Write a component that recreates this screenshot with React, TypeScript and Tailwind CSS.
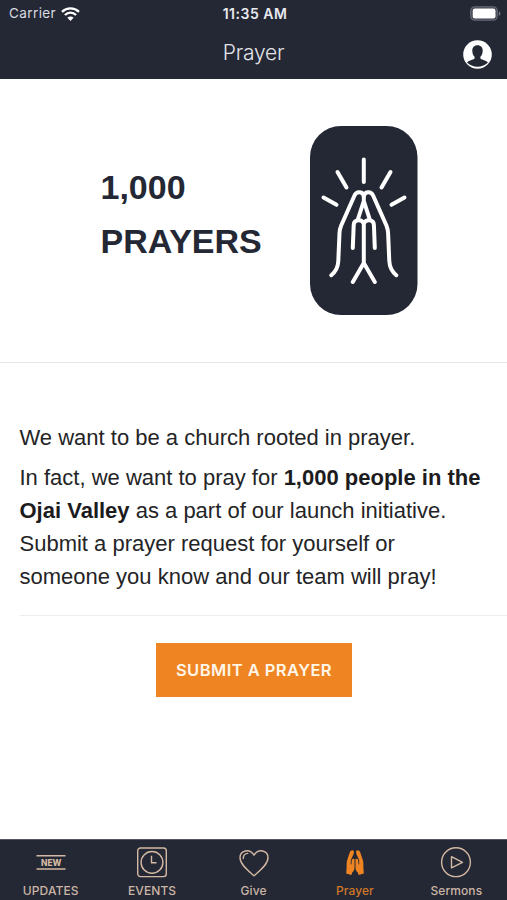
import type { ReactNode } from "react";

const TAN = "#d3b8a3";
const ORANGE = "#ef8522";

function WifiIcon() {
  return (
    <svg width="19" height="14" viewBox="0 0 19 14" fill="none" stroke="#fff" strokeWidth="2.3">
      <path d="M1 4.9C5.9 .3 13.1 .3 18 4.9" />
      <path d="M3.9 8C7.2 5 11.8 5 15.1 8" />
      <path d="M9.5 14 6.4 10.8C8.2 9.1 10.8 9.1 12.6 10.8Z" fill="#fff" stroke="none" />
    </svg>
  );
}

function BatteryIcon() {
  return (
    <svg width="31" height="15" viewBox="0 0 31 15">
      <rect x=".8" y=".8" width="26.4" height="13.4" rx="4" fill="#3d404b" stroke="#666974" strokeWidth="1.3" />
      <rect x="2.7" y="2.6" width="22.8" height="9.8" rx="2.2" fill="#fff" />
      <path d="M28.8 5.2c2.1.8 2.1 3.8 0 4.6Z" fill="#747781" />
    </svg>
  );
}

function ProfileIcon() {
  return (
    <svg width="29" height="29" viewBox="0 0 29 29">
      <circle cx="14.5" cy="14.5" r="14.3" fill="#fff" />
      <path
        d="M14.5 5.2c3.4 0 5.2 2.3 5.2 5.5 0 2.5-.9 4.8-2.3 6.1v1.500c0 1.300 5.800 2 7.600 4.300-2.600 2.700-6.300 4.200-10.500 4.200s-7.900-1.500-10.500-4.200c1.800-2.300 7.600-3 7.600-4.300v-1.500c-1.400-1.300-2.300-3.600-2.300-6.100 0-3.200 1.800-5.500 5.200-5.500Z"
        fill="#242834"
      />
    </svg>
  );
}

function PrayingHands() {
  return (
    <svg
      width="108"
      height="190"
      viewBox="310 126 108 190"
      fill="none"
      stroke="#fff"
      strokeWidth="4"
      strokeLinecap="round"
      strokeLinejoin="round"
    >
      <rect x="310" y="126" width="107.5" height="189" rx="31" fill="#242834" stroke="none" />
      <path d="M363.8 159.5V182M337.5 172l9 15.5M390.5 172l-9 15.5M323.5 197.5l13 7.3M404.5 197.5l-13 7.3" />
      <path d="M331.3 275.2c5-4 6.7-8.500 7-14.200L339.500 233c.1-3 .7-5 1.700-7.500L354.500 195.500c2.200-5 8.700-4 9.300.8.600-4.800 7.100-5.800 9.300-.8l13.300 30c1 2.500 1.600 4.500 1.700 7.500l1.200 28c.3 5.700 2 10.200 7 14.200" />
      <path d="M363.800 196v5l-6 18.500M363.800 201l6 18.500M352.800 248l.9-23c.2-5.500 8-6.500 10.100-1.200 2.100-5.300 9.900-4.300 10.100 1.200l.9 23M363.800 224v39M352.800 282l11-19 11 19" />
    </svg>
  );
}

function NewIcon() {
  return (
    <svg width="32" height="32" viewBox="0 0 32 32">
      <path d="M1.500 8.700h29M1.500 22h29" stroke={TAN} strokeWidth="1.400" />
      <text
        x="6"
        y="18.600"
        textLength="20.500"
        lengthAdjust="spacingAndGlyphs"
        fontSize="8.600"
        fontWeight="800"
        fontFamily="Inter, sans-serif"
        fill={TAN}
      >
        NEW
      </text>
    </svg>
  );
}

function ClockIcon() {
  return (
    <svg width="32" height="32" viewBox="0 0 32 32" fill="none" stroke={TAN} strokeWidth="1.400">
      <rect x="1.700" y="1" width="28.600" height="28.600" rx="2.800" />
      <circle cx="16" cy="15.400" r="10.900" />
      <path d="M15.500 8.700v7h5" />
    </svg>
  );
}

function HeartIcon() {
  return (
    <svg width="32" height="32" viewBox="0 0 32 32" fill="none" stroke={TAN} strokeWidth="1.400" strokeLinecap="round" strokeLinejoin="round">
      <path d="M16 28.800C10.500 24 2 17.500 2 10.800 2 3 11.700 1.200 16 8.200 20.300 1.200 30 3 30 10.800 30 17.500 21.500 24 16 28.800Z" />
      <path d="M5.300 11.500c-.2-3 1.600-5 4.400-5.100" />
    </svg>
  );
}

function HandsIcon() {
  return (
    <svg width="32" height="32" viewBox="0 0 32 32" fill={ORANGE}>
      <path d="M14.900 4c-1.300-1.500-3.500-.6-4.100 1.200L7.900 14c-.6 3.200 0 6.400-.5 9.400l-.2 3.200 5.200 1.300.8-2.500c1.700-1.300 2.300-2.800 2.300-5v-8.300c-1.700-.8-2.700.3-2.800 1.900l-.2 3.500-.8-.2.200-4.300 2.800-6.300Z" />
      <path d="M17.100 4c1.300-1.500 3.500-.6 4.100 1.200l2.900 8.800c.6 3.200 0 6.400.5 9.400l.2 3.200-5.200 1.300-.8-2.500c-1.700-1.300-2.300-2.800-2.300-5v-8.300c1.700-.8 2.700.3 2.800 1.900l.2 3.500.8-.2-.2-4.300-2.800-6.300Z" />
    </svg>
  );
}

function PlayIcon() {
  return (
    <svg width="32" height="32" viewBox="0 0 32 32" fill="none" stroke={TAN} strokeWidth="1.400" strokeLinejoin="round">
      <circle cx="16" cy="15.200" r="14.400" />
      <path d="M11.500 9.700v11.200l11-5.600Z" />
    </svg>
  );
}

function Tab({ icon, label, active = false }: { icon: ReactNode; label: string; active?: boolean }) {
  return (
    <button className="flex flex-1 flex-col items-center pt-[7px]">
      {icon}
      <span
        className={`mt-[4px] text-[12px] leading-[15px] font-medium tracking-[0.1px] ${active ? "text-[#ce7729]" : "text-[#cbb5a6]"}`}
      >
        {label}
      </span>
    </button>
  );
}

export default function App() {
  return (
    <div className="flex h-[900px] w-[507px] flex-col overflow-hidden bg-white font-['Liberation_Sans',Arial,sans-serif] text-[#242426]">
      <header className="h-[79px] shrink-0 bg-[#242834] font-[Inter,sans-serif]">
        <div className="grid h-[27px] grid-cols-3 items-center pr-[6px] pl-[9px]">
          <div className="flex items-center gap-[5px] text-[13.5px] tracking-[0.4px] text-[#d9dae0]">
            Carrier
            <WifiIcon />
          </div>
          <div className="text-center text-[14px] font-semibold tracking-[0.5px] text-[#e9eaf0]">11:35 AM</div>
          <div className="flex justify-end">
            <BatteryIcon />
          </div>
        </div>
        <div className="grid h-[52px] grid-cols-[1fr_auto_1fr] items-center pr-[15px] pl-[15px]">
          <span />
          <h1 className="text-[21px] font-light tracking-[-0.25px] text-[#e3e4e9]">Prayer</h1>
          <div className="flex justify-end pt-[2px]">
            <ProfileIcon />
          </div>
        </div>
      </header>

      <section className="flex h-[284px] shrink-0 items-start border-b border-[#e6e6e8] pl-[100.5px]">
        <h2 className="mt-[82px] w-[209.5px] text-[34px] leading-[53.5px] font-bold text-[#242834]">
          1,000
          <br />
          PRAYERS
        </h2>
        <div className="mt-[47px]">
          <PrayingHands />
        </div>
      </section>

      <main className="flex-1 pt-[58px] pl-[19.5px] text-[22px] leading-[33px] whitespace-nowrap">
        <p>We want to be a church rooted in prayer.</p>
        <p className="mt-[7px]">
          In fact, we want to pray for <b className="text-[#1c1c1e]">1,000 people in the</b>
          <br />
          <b className="text-[#1c1c1e]">Ojai Valley</b> as a part of our launch initiative.
          <br />
          Submit a prayer request for yourself or
          <br />
          someone you know and our team will pray!
        </p>
        <div className="mt-[22px] h-px bg-[#ededef]" />
        <button className="mt-[27px] ml-[136.5px] flex h-[54px] w-[196px] items-center justify-center bg-[#ef8522] font-[Inter,sans-serif] text-[16.5px] font-semibold tracking-[0.45px] text-[#fff6e8]">
          SUBMIT A PRAYER
        </button>
      </main>

      <nav className="flex h-[61px] shrink-0 border-t border-[#555863] bg-[#242834] font-[Inter,sans-serif]">
        <Tab icon={<NewIcon />} label="UPDATES" />
        <Tab icon={<ClockIcon />} label="EVENTS" />
        <Tab icon={<HeartIcon />} label="Give" />
        <Tab icon={<HandsIcon />} label="Prayer" active />
        <Tab icon={<PlayIcon />} label="Sermons" />
      </nav>
    </div>
  );
}
